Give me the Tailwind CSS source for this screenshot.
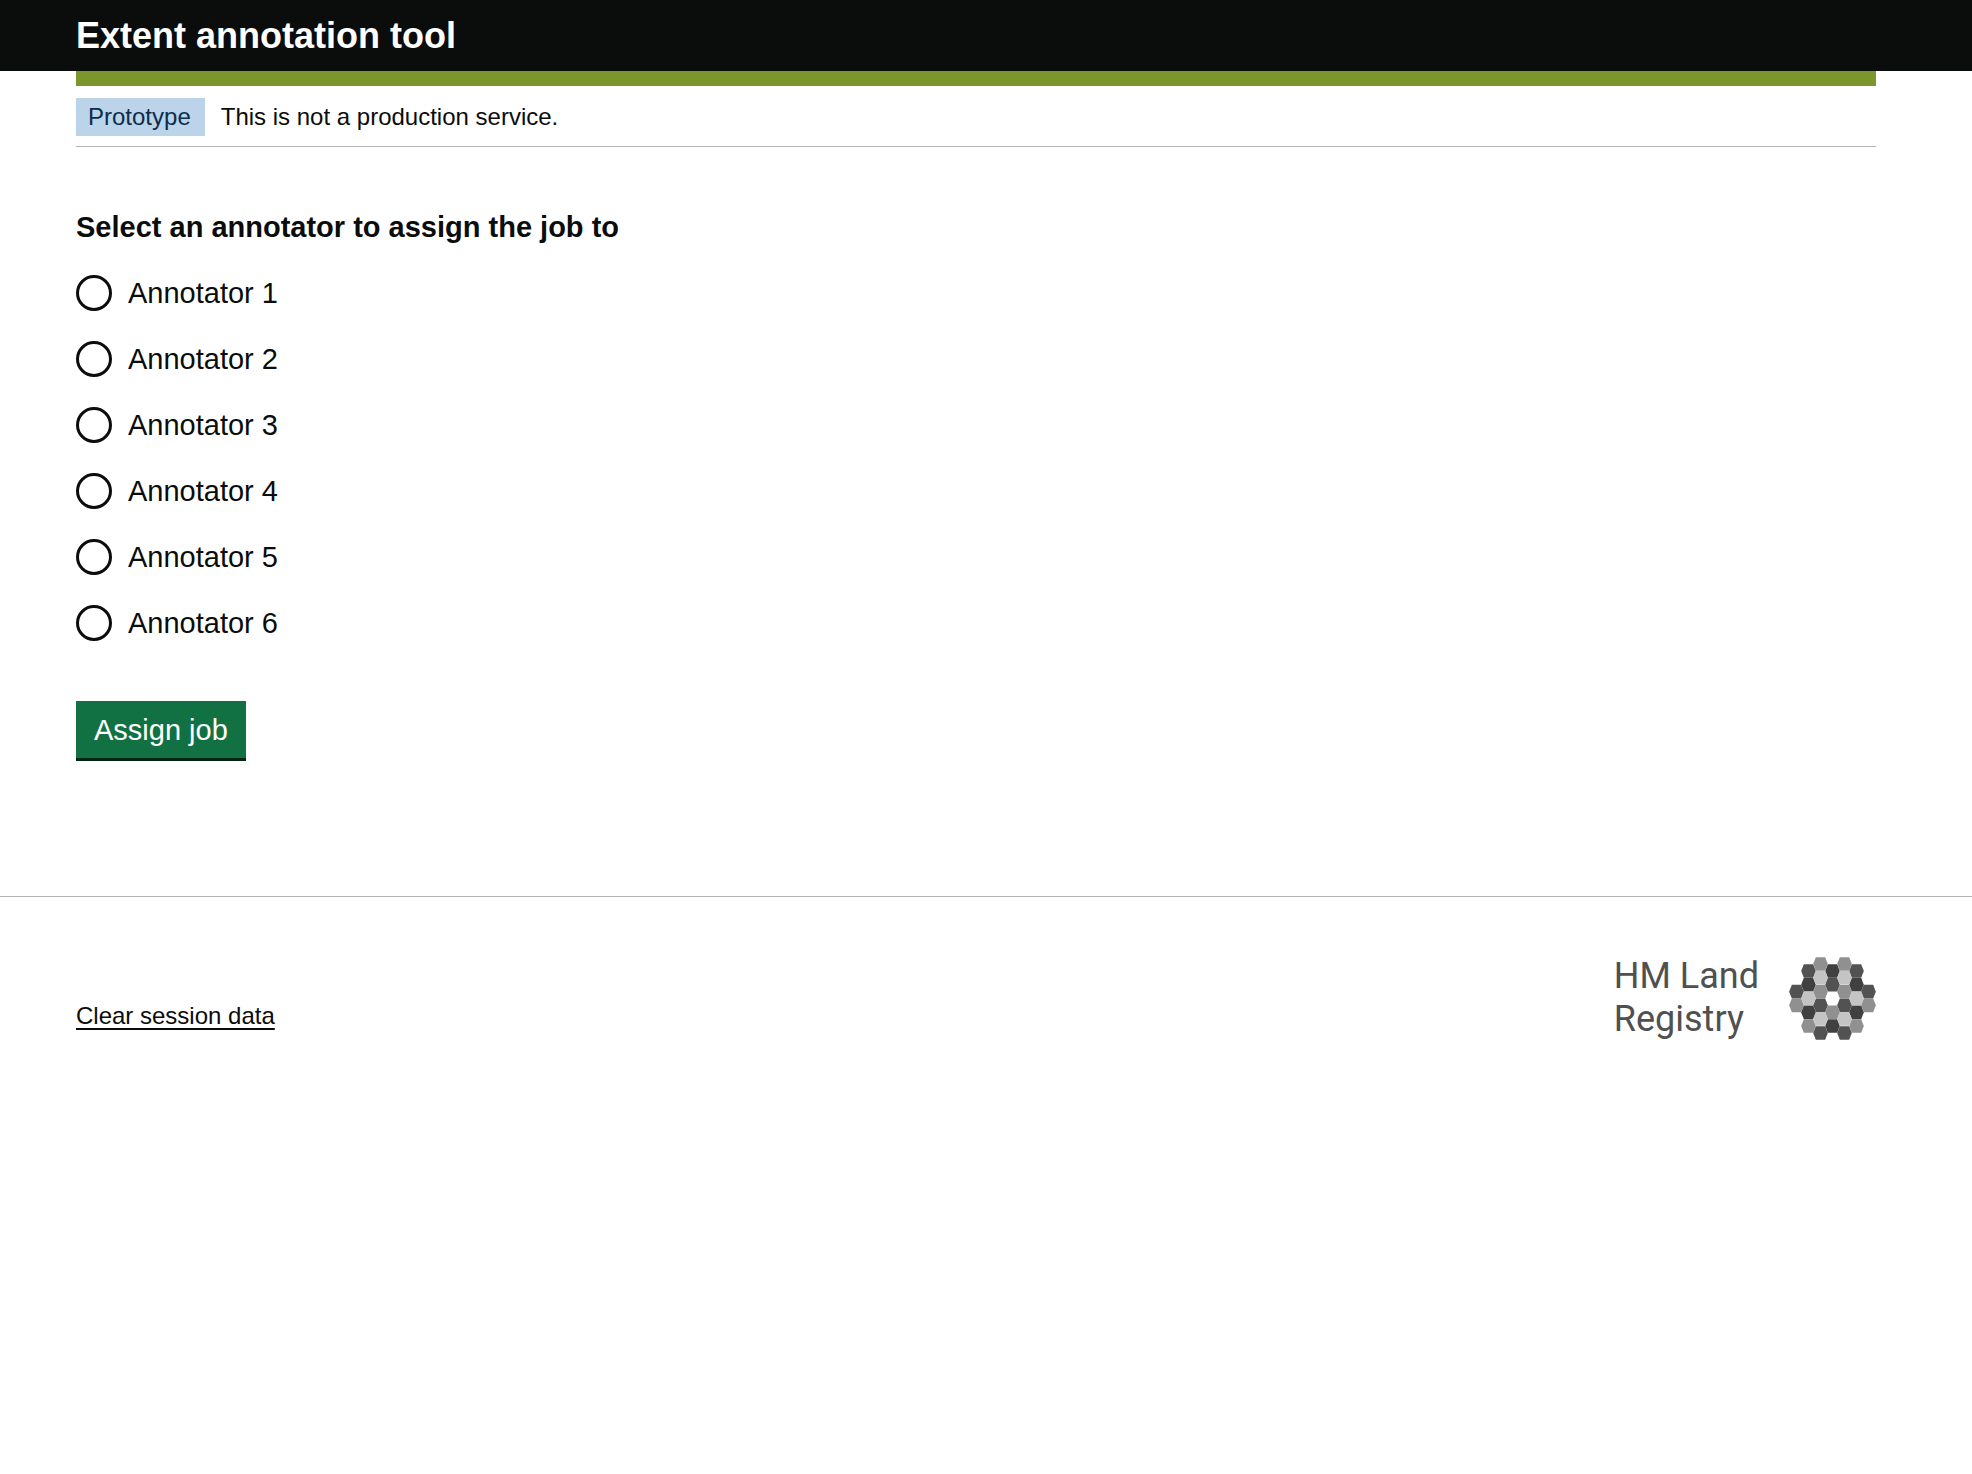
<!DOCTYPE html>
<html lang="en">
<head>
<meta charset="utf-8">
<meta name="viewport" content="width=device-width, initial-scale=1">
<title>Extent annotation tool</title>
<script src="https://cdn.jsdelivr.net/npm/@tailwindcss/browser@4"></script>
</head>
<body class="bg-white font-['Liberation_Sans',Arial,sans-serif] text-[#0b0c0c]">
<header class="bg-[#0b0c0c] pt-[14px] pr-24 pb-[14px] pl-19 text-4xl leading-[43px] font-bold text-white">Extent annotation tool</header>

<div class="pr-24 pl-19">
  <div class="h-[15px] bg-[#7b972b]"></div>
  <div class="flex items-center gap-4 border-b border-[#b1b4b6] pt-3 pb-[10px] text-2xl leading-[38px]">
    <strong class="bg-[#bbd4ea] pr-[14px] pl-3 font-normal text-[#0c2d4a]">Prototype</strong>
    <span>This is not a production service.</span>
  </div>

  <main class="pt-15">
    <form>
      <fieldset>
        <legend class="mb-7 text-[29px] leading-10 font-bold">Select an annotator to assign the job to</legend>
        <div class="flex flex-col items-start gap-[30px] text-[29px] leading-9">
          <label class="flex items-center gap-4"><input type="radio" name="annotator" value="1" class="size-9 appearance-none rounded-full border-3 border-[#0b0c0c] checked:bg-[#0b0c0c] checked:bg-clip-content checked:p-1.5">Annotator 1</label>
          <label class="flex items-center gap-4"><input type="radio" name="annotator" value="2" class="size-9 appearance-none rounded-full border-3 border-[#0b0c0c] checked:bg-[#0b0c0c] checked:bg-clip-content checked:p-1.5">Annotator 2</label>
          <label class="flex items-center gap-4"><input type="radio" name="annotator" value="3" class="size-9 appearance-none rounded-full border-3 border-[#0b0c0c] checked:bg-[#0b0c0c] checked:bg-clip-content checked:p-1.5">Annotator 3</label>
          <label class="flex items-center gap-4"><input type="radio" name="annotator" value="4" class="size-9 appearance-none rounded-full border-3 border-[#0b0c0c] checked:bg-[#0b0c0c] checked:bg-clip-content checked:p-1.5">Annotator 4</label>
          <label class="flex items-center gap-4"><input type="radio" name="annotator" value="5" class="size-9 appearance-none rounded-full border-3 border-[#0b0c0c] checked:bg-[#0b0c0c] checked:bg-clip-content checked:p-1.5">Annotator 5</label>
          <label class="flex items-center gap-4"><input type="radio" name="annotator" value="6" class="size-9 appearance-none rounded-full border-3 border-[#0b0c0c] checked:bg-[#0b0c0c] checked:bg-clip-content checked:p-1.5">Annotator 6</label>
        </div>
      </fieldset>
      <button type="submit" class="mt-15 block border-b-3 border-[#002413] bg-[#117142] px-[18px] pt-[13px] pb-3 text-[29px] leading-8 text-white">Assign job</button>
    </form>
  </main>
</div>

<footer class="mt-[135px] flex items-end justify-between border-t border-[#b1b4b6] pt-[58px] pr-24 pl-19">
  <a href="#" class="mb-[7px] text-2xl leading-9 underline decoration-2 underline-offset-4">Clear session data</a>
  <div class="flex items-center gap-[30px] text-[#505050]">
    <div class="font-[Roboto,sans-serif] text-4xl leading-[43px]">HM Land<br>Registry</div>
    <svg class="h-[83px] w-[87px]" viewBox="28 19 260 249" aria-hidden="true">
      <defs><path id="hex" d="M-22 0L-14-20.6H14L22 0L14 20.6H-14Z"/></defs>
      <g fill="#404040">
        <use href="#hex" x="158" y="61"/><use href="#hex" x="158" y="226"/>
        <use href="#hex" x="86" y="102"/><use href="#hex" x="86" y="185"/>
        <use href="#hex" x="230" y="102"/><use href="#hex" x="230" y="185"/>
      </g>
      <g fill="#525252">
        <use href="#hex" x="50" y="123"/><use href="#hex" x="266" y="123"/>
        <use href="#hex" x="86" y="61"/><use href="#hex" x="230" y="61"/>
        <use href="#hex" x="158" y="102"/>
        <use href="#hex" x="122" y="164"/><use href="#hex" x="194" y="164"/>
        <use href="#hex" x="122" y="247"/><use href="#hex" x="194" y="247"/>
      </g>
      <g fill="#909090">
        <use href="#hex" x="122" y="40"/><use href="#hex" x="194" y="40"/>
        <use href="#hex" x="122" y="123"/><use href="#hex" x="194" y="123"/>
        <use href="#hex" x="50" y="164"/><use href="#hex" x="266" y="164"/>
        <use href="#hex" x="158" y="185"/>
        <use href="#hex" x="86" y="226"/><use href="#hex" x="230" y="226"/>
      </g>
      <g fill="#c4c4c4">
        <use href="#hex" x="122" y="81"/><use href="#hex" x="194" y="81"/>
        <use href="#hex" x="86" y="143"/><use href="#hex" x="230" y="143"/>
        <use href="#hex" x="122" y="205"/><use href="#hex" x="194" y="205"/>
      </g>
    </svg>
  </div>
</footer>
</body>
</html>
